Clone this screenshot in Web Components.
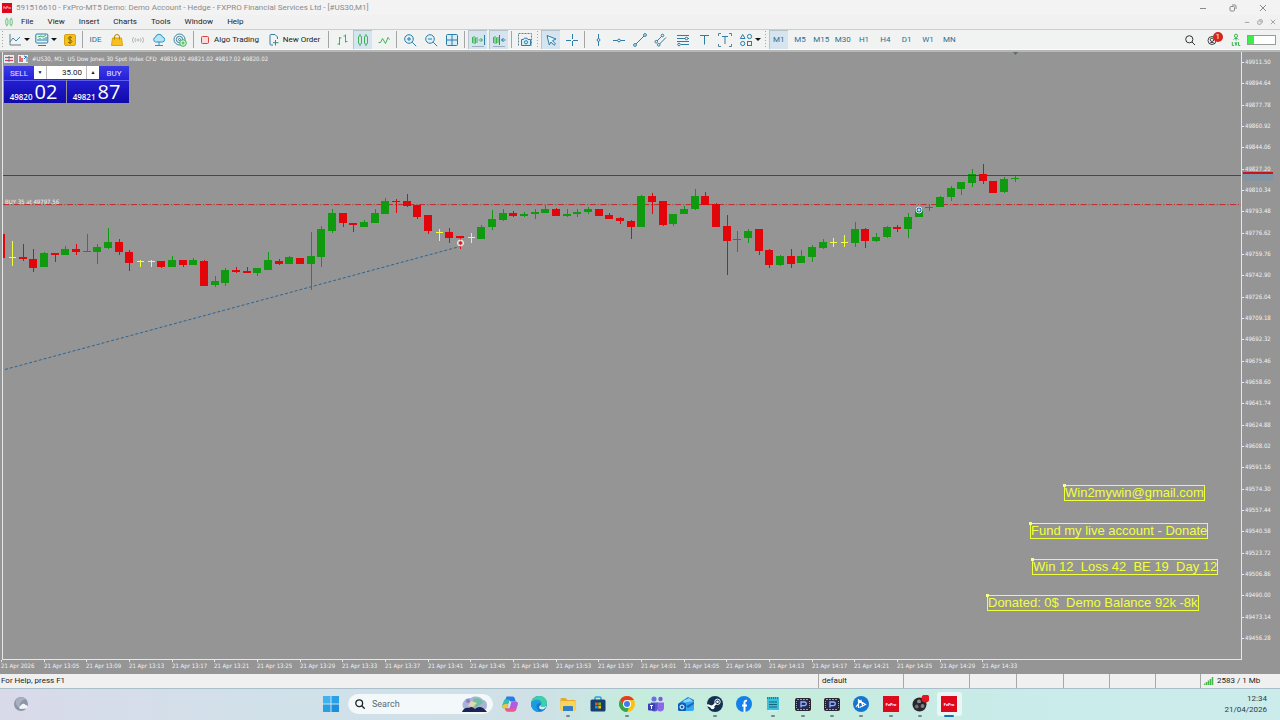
<!DOCTYPE html>
<html lang="en">
<head>
<meta charset="utf-8">
<title>MT5 terminal</title>
<style>
  html, body { height: 100%; margin: 0; }
  body { font: 8px/14px Roboto, "Open Sans", sans-serif; color: #1c1c1c; overflow: hidden; }
</style>
</head>
<body>

<terminal-window>
  <title-bar slot="title">591516610 - FxPro-MT5 Demo: Demo Account - Hedge - FXPRO Financial Services Ltd - [#US30,M1]</title-bar>
  <menu-bar slot="menu"></menu-bar>

  <tool-bar slot="tools">
    <tool-sep grip></tool-sep>
    <tool-group style="--width: 75px">
      <tool-button icon="chart" label="Charts" drop></tool-button>
      <tool-button icon="indicators" label="Indicators" drop></tool-button>
      <tool-button icon="dollar" label="Symbols"></tool-button>
    </tool-group>
    <tool-sep></tool-sep>
    <tool-group style="--width: 106px">
      <tool-button label="IDE" blue>IDE</tool-button>
      <tool-button icon="bag" label="Market"></tool-button>
      <tool-button icon="signals" label="Signals"></tool-button>
      <tool-button icon="cloud" label="VPS"></tool-button>
      <tool-button icon="radar" label="Copy"></tool-button>
    </tool-group>
    <tool-sep></tool-sep>
    <tool-group style="--width: 130px">
      <tool-button icon="stop" label="Algo Trading">Algo Trading</tool-button>
      <tool-button icon="order" label="New Order">New Order</tool-button>
    </tool-group>
    <tool-sep></tool-sep>
    <tool-group style="--width: 63px">
      <tool-button icon="bars" label="Bar chart"></tool-button>
      <tool-button icon="candles" label="Candlesticks" active></tool-button>
      <tool-button icon="line" label="Line chart"></tool-button>
    </tool-group>
    <tool-sep></tool-sep>
    <tool-group style="--width: 63px">
      <tool-button icon="zoomin" label="Zoom in"></tool-button>
      <tool-button icon="zoomout" label="Zoom out"></tool-button>
      <tool-button icon="tile" label="Tile windows"></tool-button>
    </tool-group>
    <tool-sep></tool-sep>
    <tool-group style="--width: 42px">
      <tool-button icon="scroll" label="Auto scroll" active></tool-button>
      <tool-button icon="shift" label="Chart shift" active></tool-button>
    </tool-group>
    <tool-sep></tool-sep>
    <tool-group style="--width: 21px">
      <tool-button icon="camera" label="Screenshot"></tool-button>
    </tool-group>
    <tool-sep grip></tool-sep>
    <tool-group style="--width: 42px">
      <tool-button icon="cursor" label="Cursor" active></tool-button>
      <tool-button icon="cross" label="Crosshair"></tool-button>
    </tool-group>
    <tool-sep></tool-sep>
    <tool-group style="--width: 149px">
      <tool-button icon="vline" label="Vertical line"></tool-button>
      <tool-button icon="hline" label="Horizontal line"></tool-button>
      <tool-button icon="trend" label="Trendline"></tool-button>
      <tool-button icon="channel" label="Channel"></tool-button>
      <tool-button icon="fibo" label="Fibonacci"></tool-button>
      <tool-button icon="text" label="Text"></tool-button>
      <tool-button icon="textlabel" label="Text label"></tool-button>
    </tool-group>
    <tool-group style="--width: 27px">
      <tool-button icon="shapes" label="Shapes" drop></tool-button>
    </tool-group>
    <tool-sep grip></tool-sep>
    <tool-group style="--width: 192px">
      <tool-button label="M1" blue active>M1</tool-button>
      <tool-button label="M5" blue>M5</tool-button>
      <tool-button label="M15" blue>M15</tool-button>
      <tool-button label="M30" blue>M30</tool-button>
      <tool-button label="H1" blue>H1</tool-button>
      <tool-button label="H4" blue>H4</tool-button>
      <tool-button label="D1" blue>D1</tool-button>
      <tool-button label="W1" blue>W1</tool-button>
      <tool-button label="MN" blue>MN</tool-button>
    </tool-group>
    <tool-group slot="end" style="--width: 97px">
      <tool-button icon="search" label="Search"></tool-button>
      <tool-button icon="bell" label="Notifications" badge="1"></tool-button>
      <tool-button icon="level" label="Level"></tool-button>
      <tool-button icon="battery" label="Connection" wide></tool-button>
    </tool-group>
  </tool-bar>

  <price-chart slot="chart">
    <chart-note style="left: 1061px; top: 433px">Win2mywin@gmail.com</chart-note>
    <chart-note style="left: 1027px; top: 471px">Fund my live account - Donate</chart-note>
    <chart-note style="left: 1029px; top: 507px">Win 12&nbsp; Loss 42&nbsp; BE 19&nbsp; Day 12</chart-note>
    <chart-note style="left: 984px; top: 543px">Donated: 0$&nbsp; Demo Balance 92k -8k</chart-note>
    <trade-panel slot="panel" sell="49820" sell-pips="02" buy="49821" buy-pips="87"></trade-panel>
  </price-chart>

  <status-bar slot="status"></status-bar>
  <task-bar slot="taskbar"></task-bar>
</terminal-window>

<script>
(function (customElements) {
  'use strict';

  const BLUE = '#2c7da8';
  const GREEN = '#3cb553';

  // icons of the terminal, on a 14px grid
  const ICONS = {
    chart: `<path d="M2 1v11h11" stroke="#6b7d88"/><path d="M2 9l3-4 3 3 4-4" stroke="#3f8ba8"/>`,
    indicators: `<rect x=".8" y="1" width="12" height="9" rx="1" stroke="${BLUE}" fill="#e3f2f7"/><path d="M3 8V6M5 8V5M7 8V6M9 8V5M11 8V4" stroke="${BLUE}"/><path d="M3 4l3-1 2 1 3-2" stroke="${GREEN}"/><path d="M3 12.5h8" stroke="${BLUE}"/>`,
    dollar: `<rect x="1.5" y="1.5" width="11" height="11" rx="1.5" fill="#f4c220" stroke="#d9a210"/><path d="M9 4.700C8 3.600 5.200 4 5.300 5.400 5.400 7.200 8.800 6.500 8.900 8.500 8.900 10 6 10.300 5 9.200M7 3v8" stroke="#8a6400"/>`,
    bag: `<path d="M2.500 5h9l1 7.500h-11z" fill="#f5c11c" stroke="#dba413"/><path d="M4.500 6.500V4a2.500 2.500 0 0 1 5 0v2.500" stroke="#b98500"/>`,
    signals: `<g stroke="#b4b8ba"><circle cx="7" cy="7" r="1"/><path d="M4.700 5a3 3 0 0 0 0 4M9.300 5a3 3 0 0 1 0 4M2.500 4a5 5 0 0 0 0 6M11.500 4a5 5 0 0 1 0 6"/></g>`,
    cloud: `<path d="M3.500 9a2.500 2.500 0 0 1 0-4.800 3.600 3.600 0 0 1 7-.3A2.600 2.600 0 0 1 10.500 9z" fill="#b9e4f7" stroke="#2495c4"/><path d="M7 9v3M3 12.500h8" stroke="#2495c4"/>`,
    radar: `<g stroke="#3d7f9f"><circle cx="6.500" cy="6.500" r="5.500"/><circle cx="6.500" cy="6.500" r="3.200"/><circle cx="6.500" cy="6.500" r="1"/></g><circle cx="10" cy="10" r="3.300" fill="#d9f4dc" stroke="${GREEN}"/><path d="M8.500 10h3M10 8.500v3" stroke="${GREEN}"/>`,
    stop: `<rect x="3.500" y="3.500" width="7" height="7" rx="1" fill="#fbdcdc" stroke="#d04747"/>`,
    order: `<path d="M10.500 6V4L8 1.500H4a1 1 0 0 0-1 1v8.500a1 1 0 0 0 1 1h2" stroke="#3a7d9e"/><path d="M8.500 7v5.500M6 9.700h5.500" stroke="#3b8f77"/>`,
    bars: `<path d="M4.500 4v8M2.500 11h2M4.500 5h2M10.500 1.500v8M8.500 3h2M10.500 8.500h2" stroke="${GREEN}"/>`,
    candles: `<g stroke="${GREEN}"><rect x="2.500" y="3" width="3" height="8" rx="1"/><rect x="8.500" y="3" width="3" height="8" rx="1"/><path d="M4 1v2M4 11v2M10 1v2M10 11v2"/></g>`,
    line: `<path d="M1.500 9.500h2l2-4 3 5 2.500-6 1.500 2" stroke="${GREEN}"/>`,
    zoomin: `<circle cx="6" cy="6" r="4.300" fill="#dff1f8" stroke="${BLUE}"/><path d="M9.200 9.200l4 4M4 6h4M6 4v4" stroke="${BLUE}"/>`,
    zoomout: `<circle cx="6" cy="6" r="4.300" fill="#dff1f8" stroke="${BLUE}"/><path d="M9.200 9.200l4 4M4 6h4" stroke="${BLUE}"/>`,
    tile: `<rect x="1.500" y="1.500" width="11" height="11" rx="1" fill="#d5edf7" stroke="${BLUE}"/><path d="M7 1.500v11M1.500 7h11" stroke="${BLUE}"/>`,
    scroll: `<path d="M1.500 4v6M3 3v8M4.500 4.500v6M6 4v6" stroke="${GREEN}"/><path d="M7.500 7h4M9.500 5l2 2-2 2" stroke="${GREEN}"/><path d="M13.500 2v10" stroke="${BLUE}"/><path d="M1 13.500h12" stroke="#9ab0bc"/>`,
    shift: `<path d="M1.500 4v6M3 3v8M4.500 4.500v6M6 4v6" stroke="${GREEN}"/><path d="M7.500 2v10M13.500 7H9.500M11.500 5l-2 2 2 2" stroke="${BLUE}"/><path d="M1 13.500h12" stroke="#9ab0bc"/>`,
    camera: `<path d="M.5 12.500V.5h13v12" stroke="#5c8192" stroke-dasharray="2 1"/><path d="M3.500 6.500h2l.8-1.300h2.800l.8 1.300h2.600v6h-9z" fill="#d8eef7" stroke="${BLUE}"/><circle cx="8" cy="9.300" r="1.600" stroke="${BLUE}"/>`,
    cursor: `<path d="M3 2.500l9 3.500-3.500 1.700 3 3.300-1.500 1.300-3-3.300L5.300 12z" stroke="${BLUE}" fill="#e7f3f9"/>`,
    cross: `<path d="M7.500 1v5M7.500 8v5M1 7.500h5M8 7.500h5" stroke="${BLUE}"/>`,
    vline: `<path d="M7.500 1v4.500M7.500 8.500V13" stroke="${BLUE}"/><circle cx="7.500" cy="7" r="1.400" stroke="${BLUE}"/>`,
    hline: `<path d="M1 7.500h4.500M8.500 7.500H13" stroke="${BLUE}"/><circle cx="7" cy="7.500" r="1.400" stroke="${BLUE}"/>`,
    trend: `<path d="M3 11L11 3" stroke="${BLUE}"/><circle cx="2" cy="12" r="1.400" stroke="${BLUE}"/><circle cx="12" cy="2" r="1.400" stroke="${BLUE}"/>`,
    channel: `<path d="M3 8l5-5M5.500 11l6.500-6.500" stroke="${BLUE}"/><circle cx="2.300" cy="8.700" r="1.300" stroke="${BLUE}"/><circle cx="8.500" cy="2.500" r="1.300" stroke="${BLUE}"/><circle cx="4.700" cy="11.800" r="1.300" stroke="${BLUE}"/>`,
    fibo: `<path d="M1 2.500h12M1 5.500h8M12 5.500h1M1 8.500h12M5 11.500h8" stroke="${BLUE}"/><circle cx="10.500" cy="5.500" r="1.300" stroke="${BLUE}"/><circle cx="3" cy="11.500" r="1.300" stroke="${BLUE}"/>`,
    text: `<path d="M3 2.500h9M7.500 2.500v9" stroke="${BLUE}"/>`,
    textlabel: `<path d="M4 3.500h6M7 3.500v7.500" stroke="${BLUE}"/><path d="M.5 3V.5H3M11 .5h2.500V3M.5 11v2.500H3M11 13.500h2.500V11" stroke="#5c8192"/>`,
    shapes: `<path d="M3.700 1.500l2.300 4H1.400z" stroke="${BLUE}"/><circle cx="10.500" cy="3.500" r="2.100" stroke="${BLUE}"/><circle cx="3.700" cy="10.500" r="2.100" stroke="${BLUE}"/><rect x="8.500" y="8.500" width="4" height="4" stroke="${BLUE}"/>`,
    search: `<circle cx="6.300" cy="6.300" r="3.600" stroke="#333"/><path d="M9 9l3 3" stroke="#333"/>`,
    bell: `<circle cx="6" cy="7.500" r="4" stroke="#444"/><circle cx="6" cy="6.800" r="1.700" stroke="#444"/><path d="M3.500 10.500c1-1.500 4-1.500 5 0" stroke="#444"/>`,
    level: `<g stroke="${GREEN}"><circle cx="7" cy="2.800" r="1.600"/><path d="M4.500 6.500C5 5 9 5 9.500 6.500M7 4.500v3"/><path d="M3.300 9v3.500h1.800M6 9l1 3.500L8 9M9.500 9v3.500h1.700"/></g>`
  };

  function icon(name) {
    if (name === 'battery') {
      return `<svg width="29" height="10" viewBox="0 0 29 10"><rect x=".5" y=".5" width="28" height="9" fill="#fff" stroke="#9a9a9a"/><rect x="1" y="1" width="6" height="8" fill="#3ded4a"/></svg>`;
    }
    return `<svg width="14" height="14" viewBox="0 0 14 14" fill="none" stroke-width="1">${ICONS[name]}</svg>`;
  }

  class BaseElement extends HTMLElement {
    constructor() {
      super();
      this.attachShadow({ mode: 'open' });
    }
    connectedCallback() {
      this.shadowRoot.innerHTML = this.render();
    }
  }

  class TerminalWindow extends BaseElement {
    render() {
      return `
        <style>
          :host { display: flex; flex-direction: column; height: 100vh; background: #f0f0f0; }
          .chart { flex: 1; min-height: 0; display: flex; }
        </style>
        <slot name="title"></slot>
        <slot name="menu"></slot>
        <slot name="tools"></slot>
        <div class="chart"><slot name="chart"></slot></div>
        <slot name="status"></slot>
        <slot name="taskbar"></slot>`;
    }
  }

  // minimise, restore and close, in the title row and again in the menu row
  class WindowControls extends BaseElement {
    render() {
      return `
        <style>
          :host { display: flex; gap: var(--gap, 16px); color: #8a8a8a; }
          button { all: unset; display: flex; align-items: center; width: var(--size, 14px); justify-content: center; }
          svg { display: block; width: var(--glyph, 8px); height: var(--glyph, 8px); }
        </style>
        <button aria-label="Minimize"><svg viewBox="0 0 8 8" fill="none" stroke="currentColor"><path d="M1 4.500h6"/></svg></button>
        <button aria-label="Restore"><svg viewBox="0 0 8 8" fill="none" stroke="currentColor"><rect x="1" y="2.500" width="4.500" height="4.500" rx="1"/><path d="M3 1h3a1 1 0 0 1 1 1v3"/></svg></button>
        <button aria-label="Close"><svg viewBox="0 0 8 8" fill="none" stroke="currentColor"><path d="M1 1l6 6M7 1L1 7"/></svg></button>`;
    }
  }

  class TitleBar extends BaseElement {
    render() {
      return `
        <style>
          :host { display: flex; align-items: center; height: 15px; padding: 0 10px 0 2px; background: #f3f3f3; color: #8b8b8b; white-space: nowrap; }
          .logo { display: flex; align-items: center; justify-content: center; width: 10px; height: 10px; margin-right: 4px; background: #e0061c; color: #fff; font-size: 3px; }
          .text { flex: 1; }
        </style>
        <span class="logo">FxPro</span>
        <span class="text"><slot></slot></span>
        <window-controls></window-controls>`;
    }
  }

  class MenuBar extends BaseElement {
    render() {
      const items = ['File', 'View', 'Insert', 'Charts', 'Tools', 'Window', 'Help'];
      return `
        <style>
          :host { display: flex; align-items: center; height: 14px; padding: 0 3px 0 4px; background: #f1f1f1; }
          svg { width: 10px; height: 10px; margin-right: 7px; }
          nav { flex: 1; display: flex; gap: 14px; }
          a { color: #1c1c1c; text-decoration: none; }
          window-controls { --gap: 5px; --size: 8px; --glyph: 6px; }
        </style>
        ${icon('candles')}
        <nav>${items.map(i => `<a href="#">${i}</a>`).join('')}</nav>
        <window-controls></window-controls>`;
    }
  }

  class ToolBar extends BaseElement {
    render() {
      return `
        <style>
          :host { display: flex; height: 19px; background: #f1f2f2; border-top: 1px solid #cdcdcd; border-bottom: 1px solid #fafafa; }
          .end { flex: 1; display: flex; justify-content: flex-end; padding-right: 4px; }
        </style>
        <slot></slot>
        <div class="end"><slot name="end"></slot></div>`;
    }
  }

  class ToolGroup extends BaseElement {
    render() {
      return `
        <style>:host { display: flex; flex: none; width: var(--width); }</style>
        <slot></slot>`;
    }
  }

  class ToolSep extends BaseElement {
    render() {
      return `
        <style>
          :host { display: block; flex: none; width: 1px; margin: 1px 2px; background: #a5a5a5; }
          :host([grip]) { background: repeating-linear-gradient(#a5a5a5 0 1px, transparent 1px 3px); }
        </style>`;
    }
  }

  class ToolButton extends BaseElement {
    render() {
      const name = this.getAttribute('icon');
      const badge = this.getAttribute('badge');
      return `
        <style>
          :host { display: flex; flex: 1 1 0; min-width: 0; }
          :host([drop]) { flex: 0 0 27px; }
          :host([wide]) { flex: 0 0 29px; }
          button { all: unset; position: relative; flex: 1; display: flex; align-items: center; justify-content: center; gap: 2px; margin: 0 1px; white-space: nowrap; line-height: 19px; }
          :host([wide]) button { margin: 0; }
          :host([blue]) button { color: #2b6f92; }
          :host([active]) button { background: #d5e4ef; box-shadow: inset 1px 1px #b6c4ce; }
          svg { flex: none; }
          i { border: 3px solid transparent; border-top-color: #111; border-bottom: 0; }
          b { position: absolute; left: 10px; top: 2px; width: 10px; height: 10px; border-radius: 50%; background: #d3261f; color: #fff; font-weight: 400; line-height: 10px; text-align: center; }
        </style>
        <button aria-label="${this.getAttribute('label')}">
          ${name ? icon(name) : ''}<slot></slot>
          ${this.hasAttribute('drop') ? '<i></i>' : ''}
          ${badge ? `<b>${badge}</b>` : ''}
        </button>`;
    }
  }

  // one row per minute bar: colour, high, body top, body bottom, low
  const BARS = [
    ['r', 234, 234, 258, 258], ['y', 241, 257, 258, 266], ['r', 244, 257, 259, 261], ['r', 249, 259, 268, 272],
    ['g', 252, 253, 267, 267], ['r', 253, 253, 255, 262], ['g', 246, 249, 255, 255], ['r', 244, 249, 252, 255],
    ['g', 234, 251, 252, 252], ['g', 244, 247, 252, 264], ['g', 228, 242, 248, 249], ['r', 239, 242, 252, 255],
    ['r', 250, 252, 263, 271], ['y', 260, 261, 262, 267], ['y', 260, 261, 262, 267], ['r', 261, 261, 267, 268],
    ['g', 256, 260, 267, 267], ['r', 260, 260, 265, 267], ['g', 258, 260, 265, 265], ['r', 260, 261, 286, 286],
    ['g', 276, 281, 285, 287], ['g', 268, 270, 283, 286], ['r', 267, 270, 272, 273], ['r', 267, 271, 273, 273],
    ['g', 268, 268, 273, 276], ['g', 252, 260, 270, 270], ['r', 259, 261, 264, 265], ['g', 256, 257, 264, 264],
    ['r', 258, 258, 264, 264], ['g', 232, 256, 264, 290], ['g', 226, 229, 257, 267], ['g', 209, 213, 231, 233],
    ['r', 213, 213, 223, 227], ['r', 223, 223, 225, 232], ['g', 220, 222, 227, 227], ['g', 209, 213, 223, 223],
    ['g', 198, 201, 214, 214], ['r', 199, 201, 202, 213], ['r', 194, 201, 206, 207], ['r', 205, 205, 217, 219],
    ['r', 215, 215, 231, 234], ['y', 229, 232, 233, 241], ['r', 228, 232, 238, 243], ['r', 236, 236, 238, 249],
    ['y', 233, 237, 238, 243], ['g', 225, 227, 239, 239], ['g', 210, 219, 227, 230], ['g', 209, 213, 220, 221],
    ['r', 211, 213, 216, 217], ['g', 212, 214, 216, 217], ['g', 209, 212, 214, 219], ['g', 205, 209, 213, 213],
    ['r', 208, 209, 216, 216], ['g', 209, 214, 216, 217], ['g', 209, 212, 214, 217], ['g', 207, 209, 212, 214],
    ['r', 209, 209, 216, 216], ['r', 213, 215, 219, 219], ['r', 217, 218, 221, 224], ['r', 220, 221, 227, 239],
    ['g', 195, 196, 227, 227], ['r', 193, 196, 202, 214], ['r', 201, 201, 225, 226], ['g', 214, 214, 224, 226],
    ['g', 206, 209, 214, 214], ['g', 189, 196, 209, 210], ['r', 192, 196, 205, 205], ['r', 203, 204, 227, 227],
    ['r', 215, 226, 241, 275], ['g', 231, 239, 240, 252], ['g', 229, 231, 238, 243], ['r', 229, 229, 251, 255],
    ['r', 249, 250, 265, 268], ['g', 255, 256, 265, 266], ['r', 249, 256, 264, 268], ['g', 250, 256, 263, 263],
    ['g', 245, 247, 257, 262], ['g', 239, 242, 248, 249], ['y', 238, 242, 243, 247], ['y', 235, 242, 243, 247],
    ['g', 222, 229, 243, 247], ['r', 228, 229, 241, 248], ['g', 233, 237, 241, 242], ['g', 226, 227, 237, 238],
    ['r', 225, 227, 229, 232], ['g', 213, 217, 229, 238], ['g', 208, 209, 217, 217], ['g', 205, 207, 208, 211],
    ['g', 196, 197, 207, 207], ['g', 186, 188, 197, 201], ['g', 182, 182, 189, 195], ['g', 169, 174, 183, 187],
    ['r', 164, 174, 181, 184], ['r', 181, 181, 193, 193], ['g', 177, 179, 192, 193], ['g', 176, 178, 179, 182]
  ];
  const COLORS = { r: '#e20509', g: '#109a10', y: '#f0ff3a' };
  const STEP = 32 / 3;

  function drawBars() {
    return BARS.map(([c, high, top, bottom, low], i) => {
      const x = Math.round(1.2 + i * STEP);
      const half = c === 'y' ? 3 : 4;
      return `<g fill="${COLORS[c]}"><rect x="${x}" y="${high}" width="1" height="${low - high}"/>` +
        `<rect x="${x - half}" y="${top}" width="${c === 'y' ? 7 : 8}" height="${Math.max(bottom - top, 1)}"/></g>`;
    }).join('');
  }

  function drawPrices() {
    let out = '';
    for (let i = 0; i < 28; i++) {
      const y = Math.round(62 + i * STEP * 2);
      out += `<path d="M0 ${y + .5}h2"/><text x="3" y="${y + 2}">${(49911.5 - i * 16.86).toFixed(2)}</text>`;
    }
    return out;
  }

  function drawTimes() {
    let out = '';
    for (let i = 0; i < 24; i++) {
      const min = 61 + i * 4;
      const time = i ? `${12 + Math.floor(min / 60)}:${String(min % 60).padStart(2, '0')}` : '2026';
      const x = Math.round(1 + i * STEP * 4);
      out += `<path d="M${x + .5} 0v2"/><text x="${x}" y="8">21 Apr ${time}</text>`;
    }
    return out;
  }

  class PriceChart extends BaseElement {
    render() {
      return `
        <style>
          :host { flex: 1; display: grid; grid-template: minmax(0, 1fr) 14px / minmax(0, 1fr) 38px; background: #959595; border-top: 2px solid #b6b6b6; color: #f2f2f2; font: 6px/8px "DejaVu Sans Condensed", "Open Sans", sans-serif; }
          .plot { position: relative; margin-left: 2px; border: 1px solid #e6e6e6; border-top: 0; overflow: hidden; }
          svg { display: block; width: 100%; height: 100%; overflow: hidden; }
          svg text { fill: #f2f2f2; }
          .axis path { stroke: #e6e6e6; }
          .time { grid-column: 1 / -1; }
          .overlay { position: absolute; left: 1px; top: 2px; }
          .caption { display: flex; align-items: center; gap: 4px; height: 9px; margin-bottom: 3px; white-space: pre; }
          .caption svg { width: 10px; height: 8px; flex: none; }
        </style>
        <div class="plot">
          <svg><g transform="translate(-3 -52)">
            <path d="M1013 52h5l-2.500 3z" fill="#5f6a6a"/>
            <path d="M5 369.500L460 246.500" stroke="#2f6390" stroke-dasharray="3 2" fill="none"/>
            <line x1="3" x2="200%" y1="205.500" y2="205.500" stroke="#79a83a" stroke-dasharray="3 1"/>
            <line x1="3" x2="200%" y1="204.500" y2="204.500" stroke="#c03030" stroke-dasharray="6 2 1 1.670"/>
            ${drawBars()}
            <rect x="3" y="175" width="200%" height="1" fill="${COLORS.r}"/>
            <circle cx="460.500" cy="243" r="3" fill="#c9b5b0" stroke="#eee"/><path d="M460.500 241l2 2-2 2-2-2z" fill="#d8191f"/>
            <circle cx="919" cy="210" r="3" fill="#1a68b0" stroke="#dfeaf2"/><path d="M917.500 210h3M919 208.500v3" stroke="#fff"/>
            <text x="5" y="204">BUY 35 at 49797.56</text>
          </g></svg>
          <slot></slot>
          <div class="overlay">
            <div class="caption"><svg viewBox="0 0 10 8"><rect x=".5" y=".5" width="9" height="7" fill="#f4dada" stroke="#e4eef6"/><path d="M1 2.500h8M1 5.500h8" stroke="#d1454a"/><path d="M5 1v6" stroke="#3b76b5"/></svg><svg viewBox="0 0 10 8"><rect width="10" height="8" fill="#eef3f7"/><path d="M2 1v6M4 3v4" stroke="#d1454a" stroke-width="1.500"/><path d="M6 1l3 1v5M6 4l2-2" stroke="#2b77b5" fill="none"/></svg><span>#US30, M1:  US Dow Jones 30 Spot Index CFD  49819.02 49821.02 49817.02 49820.02</span></div>
            <slot name="panel"></slot>
          </div>
        </div>
        <svg class="axis"><g transform="translate(0 -52)">
          <rect x="1" y="174" width="30" height="7" fill="#8395a5"/>
          ${drawPrices()}
          <rect x="1" y="172" width="30" height="2" fill="#c8141d"/>
        </g></svg>
        <svg class="axis time">${drawTimes()}</svg>`;
    }
  }

  // text object on the chart, shown selected
  class ChartNote extends BaseElement {
    render() {
      return `
        <style>
          :host { position: absolute; border: 1px solid #f0ff3a; color: #f0ff3a; font: 13px/14px "Liberation Sans", Arial, sans-serif; white-space: nowrap; }
          i { position: absolute; left: -2px; top: -2px; width: 3px; height: 3px; background: #f6ff8a; }
        </style>
        <i></i><slot></slot>`;
    }
  }

  class TradePanel extends BaseElement {
    render() {
      const at = n => this.getAttribute(n);
      return `
        <style>
          :host { display: grid; grid-template-columns: 62px 62px; column-gap: 1px; width: 125px; color: #fff; font: 8px/14px "Open Sans", sans-serif; }
          .top { grid-column: 1 / -1; display: flex; min-width: 0; height: 14px; background: #2a25d4; }
          button { all: unset; box-sizing: border-box; text-align: center; }
          .tab { flex: none; width: 30px; line-height: 13px; background: linear-gradient(#3d3be6, #2420d6); color: #e4e4ff; font-family: Roboto, sans-serif; }
          .lot { flex: 1; min-width: 0; display: flex; gap: 1px; margin: 0 0 1px; background: #bbb; }
          .lot button { flex: none; width: 12px; line-height: 13px; background: #fff; color: #111; font-size: 5px; }
          input { flex: 1; width: 0; min-width: 0; border: 0; padding: 0 4px 0 0; background: #fff; color: #222; font: inherit; font-family: Roboto, sans-serif; line-height: 13px; text-align: right; }
          .price { display: flex; align-items: flex-end; justify-content: center; gap: 2px; height: 23px; padding-right: 3px; background: linear-gradient(#241ed2, #0f0aa6); border-top: 1px solid #5f5cf0; }
          .price small { font-size: 8px; line-height: 13px; font-weight: 600; }
          .price strong { font-size: 20px; line-height: 22px; font-weight: 400; }
        </style>
        <div class="top">
          <button class="tab">SELL</button>
          <div class="lot"><button aria-label="Less">▼</button><input aria-label="Volume" value="35.00"><button aria-label="More">▲</button></div>
          <button class="tab">BUY</button>
        </div>
        <button class="price"><small>${at('sell')}</small><strong>${at('sell-pips')}</strong></button>
        <button class="price"><small>${at('buy')}</small><strong>${at('buy-pips')}</strong></button>`;
    }
  }

  class StatusBar extends BaseElement {
    render() {
      return `
        <style>
          :host { display: flex; height: 14px; background: #f0f0f0; line-height: 14px; }
          span { box-sizing: border-box; padding: 0 3px; border-left: 1px solid #a8a8a8; }
          .help { flex: 1; border: 0; padding-left: 1px; }
          .net { display: flex; align-items: center; gap: 3px; width: 80px; }
        </style>
        <span class="help">For Help, press F1</span>
        <span style="width: 85px">default</span>
        ${[66, 47, 47, 46, 46, 45].map(w => `<span style="width: ${w}px"></span>`).join('')}
        <span class="net">
          <svg width="10" height="8" viewBox="0 0 10 8"><path d="M.5 8V6.500M2.500 8V5M4.500 8V3.500M6.500 8V2M8.500 8V0" stroke="#45b649" stroke-width="1.500"/></svg>
          2583 / 1 Mb
        </span>`;
    }
  }

  // taskbar applications, on an 18px grid
  const FX = `<rect x="1" y="1" width="16" height="16" fill="#dd0a1e"/><text x="9" y="10.500" font-size="4" font-weight="700" text-anchor="middle" fill="#fff">FxPro</text>`;
  const PC = `<rect x="1" y="3" width="16" height="13" rx="2" fill="#2a2430"/><path d="M3 4.500h12M3 14.500h12" stroke="#c39b62" stroke-dasharray="2 1"/><path d="M2.500 6v7M15.500 6v7" stroke="#c39b62" stroke-dasharray="1 1"/><rect x="4" y="5.500" width="10" height="8" fill="#1d2b66"/><path d="M7 12.500V7h3.500a1.800 1.800 0 0 1 0 3.600H7" stroke="#9db4ee" stroke-width="1.300" fill="none"/>`;
  const APPS = [
    ['Copilot', `<path d="M5.500 1.500h6c1.500 0 2 1 2.500 2.500l.7 2.500H9.500L8.500 5 7 9H3z" fill="#2a7be4"/><path d="M3.300 4.500h5L6.500 12c-.3 1-1 1.500-2 1.500H3c-1.500 0-2.200-1.500-1.800-3z" fill="#2fc2b0"/><path d="M1.300 10.500L4 9h3l-.7 3c-.3 1-1 1.500-2 1.500H3c-1.300 0-2-1.500-1.700-3z" fill="#f2c53d"/><path d="M12.500 16.500h-6c-1.500 0-2-1-2.500-3h4.500l2-7h4.500c1.500 0 2.200 1.500 1.800 3l-1.300 4c-.5 2-1.500 3-3 3z" fill="#b45be0"/><path d="M12.500 16.500h-6c-1.500 0-2-1-2.500-3h11.500c-.5 2-1.500 3-3 3z" fill="#ee5a86"/>`],
    ['Edge', `<circle cx="9" cy="9" r="8" fill="#1578c9"/><path d="M1 8C2 3 6 1 9.500 1 14 1 17 4.500 17 8c0 3-2.500 4-4.500 4-2 0-2-1-1.500-2C12 7 9 5.500 6.500 6 3.500 6 2 7 1 8z" fill="#3fd0a4"/><path d="M1 8c1-2 3-3.300 5.500-3.300 4 0 5.500 2.300 4.700 4.300C9 7 6 9 6.500 12c.5 2 2 4 4.500 4.800C5 18 .5 13 1 8z" fill="#1c9be0"/><path d="M11 10c-.5 1-.5 2 1.500 2 2 0 3.500-.6 4.200-1.700C16 13 14 14.500 12 14.500c-3 0-4-3-1-4.500z" fill="#d5ecf2"/>`],
    ['Explorer', `<path d="M1.500 4a1 1 0 0 1 1-1h4l2 2h7a1 1 0 0 1 1 1v9h-15z" fill="#e9a92b"/><rect x="1.500" y="6" width="15" height="10" rx="1" fill="#fbd35a"/><path d="M4 16v-4a1 1 0 0 1 1-1h8a1 1 0 0 1 1 1v4z" fill="#2f80c9"/>`, 1],
    ['Store', `<path d="M6 5V3a1 1 0 0 1 1-1h4a1 1 0 0 1 1 1v2" stroke="#2ba0dc" stroke-width="1.500" fill="none"/><rect x="1.500" y="4.500" width="15" height="12" rx="1.500" fill="#16406f"/><path fill="#f25022" d="M6 7.500h2.700v2.700H6z"/><path fill="#7fba00" d="M9.300 7.500H12v2.700H9.300z"/><path fill="#00a4ef" d="M6 10.800h2.700v2.700H6z"/><path fill="#ffb900" d="M9.300 10.800H12v2.700H9.300z"/>`],
    ['Chrome', `<circle cx="9" cy="9" r="8" fill="#fbc116"/><path d="M2.070 5A8 8 0 0 1 15.930 5H9a4 4 0 0 0-3.500 6z" fill="#e33b2e"/><path d="M2.070 5l3.460 6A4 4 0 0 0 9 13l1.800.2L9 17A8 8 0 0 1 2.070 5z" fill="#2da94f"/><circle cx="9" cy="9" r="4" fill="#fff"/><circle cx="9" cy="9" r="3" fill="#3b7ded"/>`, 1],
    ['Teams', `<circle cx="7" cy="4" r="2.500" fill="#6a6fe0"/><circle cx="13.500" cy="4" r="2.200" fill="#7a5bd8"/><path d="M4 7.500h7v6c0 4-7 4-7 0z" fill="#5559cf"/><path d="M10.500 7.500H17v5c0 4-4 5-6.500 3z" fill="#8b68e6"/><rect x="1" y="8.500" width="7" height="7" rx="1" fill="#3c3fae"/><path d="M3 10.500h3M4.500 10.500v3.500" stroke="#fff"/>`],
    ['Outlook', `<path d="M2 8l9-6 6 3v8a2 2 0 0 1-2 2H7z" fill="#1583dd"/><path d="M6 6l6-3 5 4-8 4z" fill="#8fd5fb"/><path d="M4 8l13-2v8a2 2 0 0 1-2 2H5z" fill="#37a8f0"/><path d="M9 11l8-4v2l-6 4z" fill="#1669c4"/><rect x="1" y="8" width="8" height="8" rx="1.500" fill="#0c5fb5"/><circle cx="5" cy="12" r="2" stroke="#fff" fill="none"/>`],
    ['Steam', `<circle cx="9" cy="9" r="8" fill="#14304f"/><circle cx="11.500" cy="6.800" r="2.700" stroke="#fff" fill="none"/><circle cx="11.500" cy="6.800" r="1.300" fill="#fff"/><path d="M1.200 10l5 2 3.500-3.500" stroke="#fff" stroke-width="2" fill="none"/><circle cx="6.500" cy="12.300" r="2" fill="#fff"/>`, 1],
    ['Facebook', `<circle cx="9" cy="9" r="8" fill="#1580ea"/><path d="M9.500 17v-6M7 10.500h5M9.500 11V7.500c0-1.500 1-2 2.500-1.700" stroke="#fff" stroke-width="2" fill="none"/>`],
    ['Notepad', `<rect x="3" y="2" width="12" height="15" rx="1" fill="#3cc0d8"/><path d="M3 3h12" stroke="#227f96" stroke-width="2" stroke-dasharray="1 1"/><path d="M5 7h8M5 9.500h8M5 12h8" stroke="#14657c"/><path d="M3 15h12v1a1 1 0 0 1-1 1H4a1 1 0 0 1-1-1z" fill="#c9eef4"/>`, 1],
    ['Strategy', PC, 1],
    ['Strategy 2', PC, 1],
    ['Video', `<circle cx="9" cy="9" r="8" fill="#1475d2"/><path d="M6.500 4v9M6.500 5l7 4.500-6 3M4 12l5-6.500 2 6" stroke="#fff" stroke-width="1.200" fill="none"/>`, 1],
    ['FxPro', FX, 1],
    ['OBS', `<circle cx="8.500" cy="9.500" r="7" fill="#26262b"/><circle cx="8" cy="6.500" r="2" fill="#8b8b90"/><circle cx="5.800" cy="11.500" r="2" fill="#6d6d74"/><circle cx="11.500" cy="11" r="2" fill="#808088"/><circle cx="8.500" cy="9.500" r="1.500" fill="#26262b"/><circle cx="14.500" cy="3.500" r="4" fill="#e3171d"/>`, 1],
    ['FxPro MT5', FX, 2]
  ];

  class TaskBar extends BaseElement {
    render() {
      const mark = ['', 'run', 'run on'];
      return `
        <style>
          :host { box-sizing: border-box; display: grid; grid-template-columns: 1fr 648px 1fr; height: 32px; padding-bottom: 1px; border-top: 1px solid #a9c0cb; background: linear-gradient(90deg, #d9dae9, #d0e1e9 22%, #cfe0e7 42%, #c5eddd 50%, #c6ecde 64%, #c9ebe9 78%, #cbecea); color: #24404a; }
          button { all: unset; display: flex; align-items: center; justify-content: center; }
          .weather { align-self: center; justify-self: start; margin-left: 13px; }
          .center { display: flex; align-items: center; }
          .start { width: 29px; margin-right: 3px; }
          label { box-sizing: border-box; width: 145px; height: 20px; margin-right: 2px; padding: 0 4px 0 7px; display: flex; align-items: center; gap: 7px; border-radius: 10px; background: #f3f8fb; }
          input { flex: 1; min-width: 0; border: 0; padding: 0; background: none; font: inherit; font-size: 9px; }
          input::placeholder { color: #5c686e; opacity: 1; }
          .apps { flex: 1; display: flex; height: 100%; }
          .app { position: relative; flex: 1; }
          .app.on::before { content: ""; position: absolute; inset: 3px 2px; border-radius: 3px; background: #e8f6f5; }
          .app svg { position: relative; }
          .run::after { content: ""; position: absolute; bottom: 2px; left: 50%; width: 4px; height: 2px; margin-left: -2px; border-radius: 1px; background: #75878c; }
          .run.on::after { width: 10px; margin-left: -5px; background: #0f72b8; }
          .clock { align-self: center; justify-self: end; margin-right: 13px; text-align: right; line-height: 11px; }
        </style>
        <button class="weather" aria-label="Weather"><svg width="16" height="16" viewBox="0 0 16 16"><circle cx="8" cy="8" r="7" fill="#8d96a8"/><path d="M3 4a7 7 0 0 1 10-1 7 7 0 0 0-6 9 7 7 0 0 1-4-8z" fill="#a9b1c1"/><path d="M7 13a2 2 0 0 1 1-3.500 2.500 2.500 0 0 1 4.500-.5A2 2 0 0 1 14 12.500z" fill="#f2f5fa"/></svg></button>
        <div class="center">
          <button class="start" aria-label="Start"><svg width="16" height="16" viewBox="0 0 16 16" fill="#1b8fdd"><path d="M0 0h7.500v7.500H0z" fill="#3fb3ee"/><path d="M8.500 0H16v7.500H8.500zM0 8.500h7.500V16H0z" fill="#2aa0e4"/><path d="M8.500 8.500H16V16H8.500z"/></svg></button>
          <label>
            <svg width="10" height="10" viewBox="0 0 10 10" fill="none" stroke="#222" stroke-width="1.300"><circle cx="4.200" cy="4.200" r="3.400"/><path d="M6.700 6.700l3 3"/></svg>
            <input type="search" placeholder="Search" aria-label="Search">
            <svg width="28" height="16" viewBox="0 0 28 16"><path d="M3 13C-1 8 4 1 10 2c4-3 10-1 12 2 4 0 5 6 3 9z" fill="#a9b3d6"/><path d="M12 3c5-2 9 0 10 4l-8 5z" fill="#6fc0a3"/><path d="M10 5l6 2-4 4-5-1z" fill="#e4d6a8"/><path d="M1 16c1-3 4-5 7-4 2-2 4-1 6 1 3-3 8-3 12 3z" fill="#1b2455"/><circle cx="7" cy="5" r="2" fill="#8e7cc6"/></svg>
          </label>
          <div class="apps">
            ${APPS.map(([name, art, state]) => `<button class="app ${mark[state || 0]}" aria-label="${name}"><svg width="18" height="18" viewBox="0 0 18 18">${art}</svg></button>`).join('')}
          </div>
        </div>
        <div class="clock">12:34<br>21/04/2026</div>`;
    }
  }

  customElements.define('terminal-window', TerminalWindow);
  customElements.define('window-controls', WindowControls);
  customElements.define('title-bar', TitleBar);
  customElements.define('menu-bar', MenuBar);
  customElements.define('tool-bar', ToolBar);
  customElements.define('tool-group', ToolGroup);
  customElements.define('tool-sep', ToolSep);
  customElements.define('tool-button', ToolButton);
  customElements.define('price-chart', PriceChart);
  customElements.define('chart-note', ChartNote);
  customElements.define('trade-panel', TradePanel);
  customElements.define('status-bar', StatusBar);
  customElements.define('task-bar', TaskBar);
})(window.customElements);
</script>
</body>
</html>
